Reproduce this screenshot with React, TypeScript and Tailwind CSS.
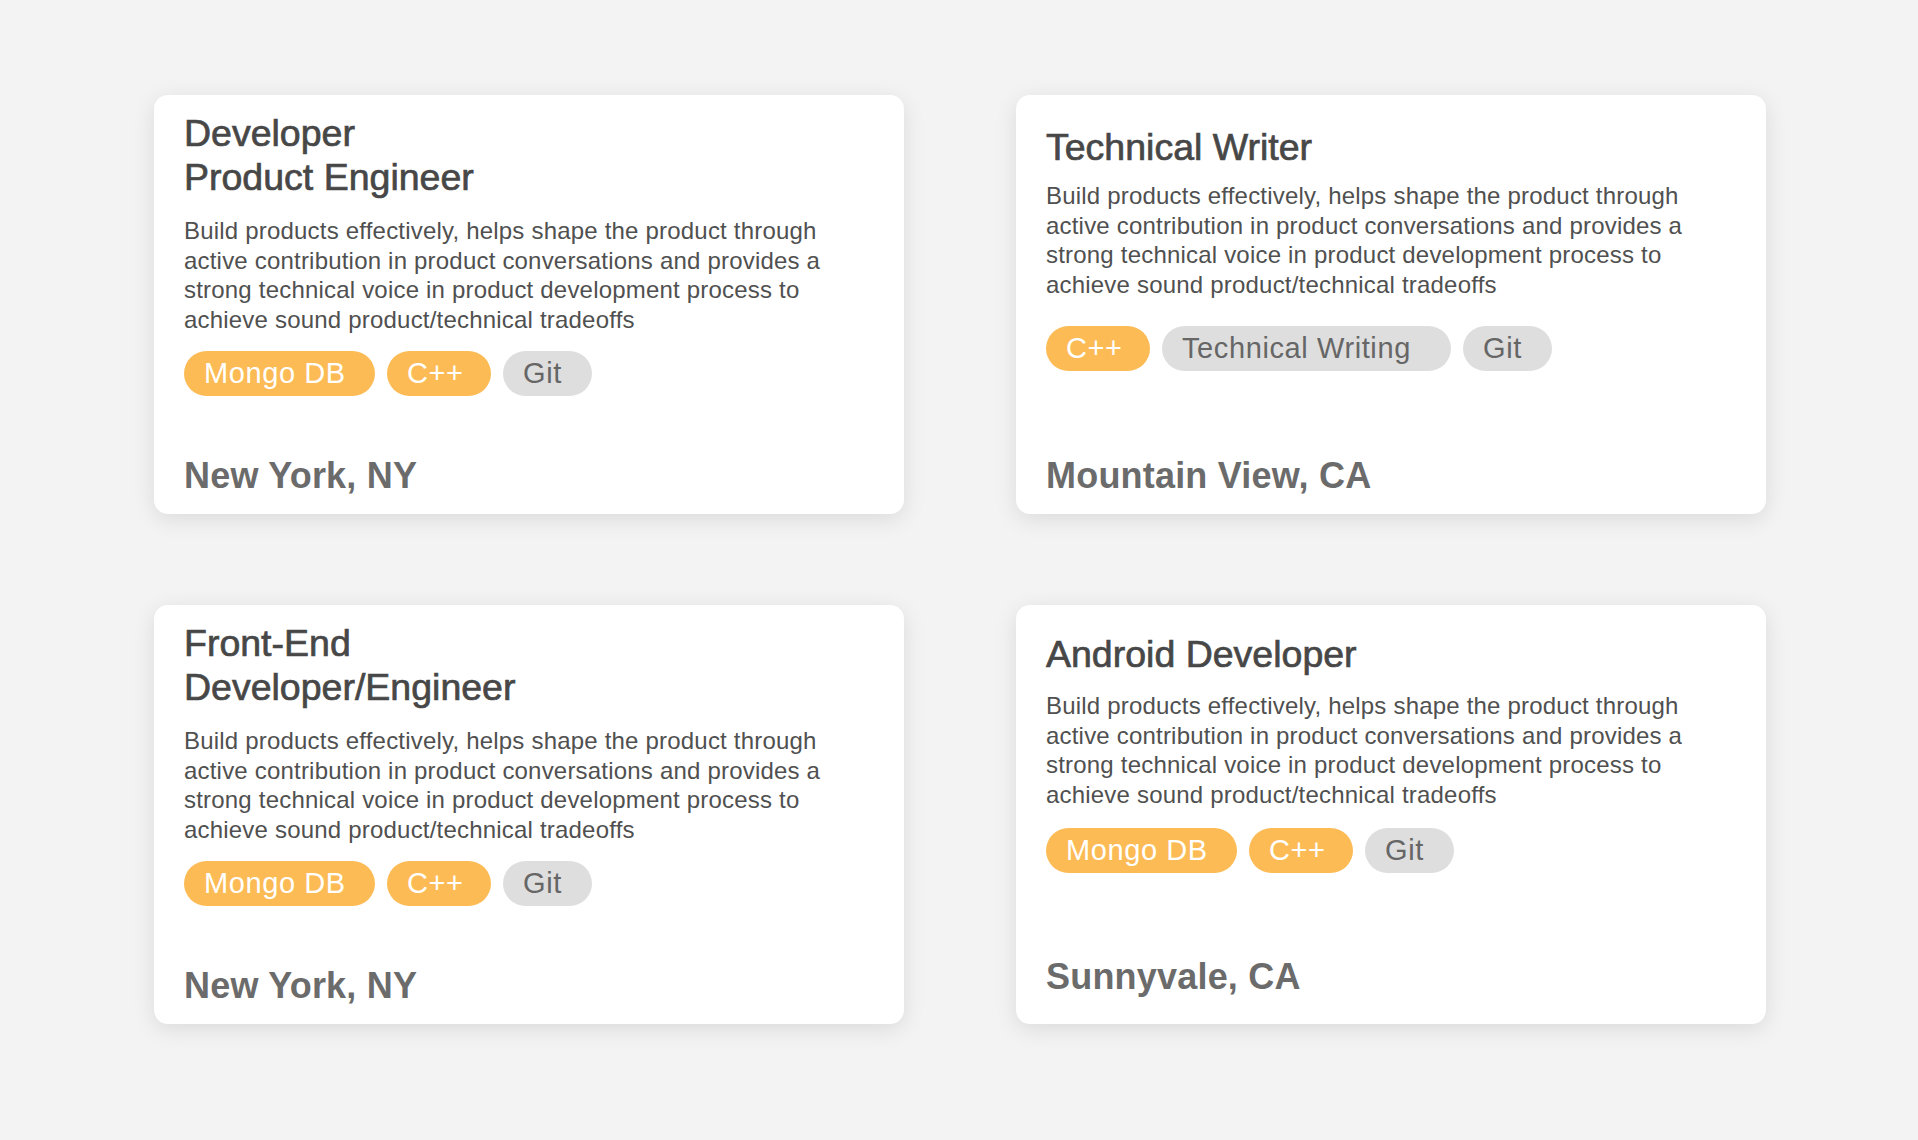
const desc =
  "Build products effectively, helps shape the product through active contribution in product conversations and provides a strong technical voice in product development process to achieve sound product/technical tradeoffs";

type Tag = { label: string; hot: boolean; w: string };

type Job = {
  title: string[];
  tags: Tag[];
  location: string;
  pad: string;
  descGap: string;
  tagGap: string;
};

const mongo: Tag = { label: "Mongo DB", hot: true, w: "w-[191px]" };
const cpp: Tag = { label: "C++", hot: true, w: "w-[104px]" };
const git: Tag = { label: "Git", hot: false, w: "w-[89px]" };

const jobs: Job[] = [
  {
    title: ["Developer", "Product Engineer"],
    tags: [mongo, cpp, git],
    location: "New York, NY",
    pad: "pt-[16px] pb-[16px]",
    descGap: "mt-[17px]",
    tagGap: "mt-[17px]",
  },
  {
    title: ["Technical Writer"],
    tags: [cpp, { label: "Technical Writing", hot: false, w: "w-[289px]" }, git],
    location: "Mountain View, CA",
    pad: "pt-[30px] pb-[16px]",
    descGap: "mt-[12px]",
    tagGap: "mt-[27px]",
  },
  {
    title: ["Front-End", "Developer/Engineer"],
    tags: [mongo, cpp, git],
    location: "New York, NY",
    pad: "pt-[16px] pb-[16px]",
    descGap: "mt-[17px]",
    tagGap: "mt-[17px]",
  },
  {
    title: ["Android Developer"],
    tags: [mongo, cpp, git],
    location: "Sunnyvale, CA",
    pad: "pt-[27px] pb-[25px]",
    descGap: "mt-[15px]",
    tagGap: "mt-[19px]",
  },
];

function Pill({ tag }: { tag: Tag }) {
  return (
    <span
      className={`${tag.w} h-[45px] rounded-full flex items-center pl-[20px] text-[29px] tracking-[0.6px] leading-none ${
        tag.hot ? "bg-[#fcbb55] text-white" : "bg-[#dedede] text-[#666666]"
      }`}
    >
      {tag.label}
    </span>
  );
}

function JobCard({ job }: { job: Job }) {
  return (
    <div
      className={`h-[419px] bg-white rounded-[14px] shadow-[0_5px_22px_rgba(0,0,0,0.1)] px-[30px] flex flex-col ${job.pad}`}
    >
      <h2 className="text-[37.5px] leading-[44px] text-[#474747] [-webkit-text-stroke:0.7px_#474747]">
        {job.title.map((line) => (
          <div key={line}>{line}</div>
        ))}
      </h2>
      <p
        className={`${job.descGap} max-w-[670px] text-[24px] leading-[29.5px] tracking-[0.2px] text-[#505050]`}
      >
        {desc}
      </p>
      <div className={`${job.tagGap} flex gap-[12px]`}>
        {job.tags.map((t) => (
          <Pill key={t.label} tag={t} />
        ))}
      </div>
      <p className="mt-auto text-[36px] leading-[44px] font-bold text-[#6b6b6b] tracking-[0.2px]">
        {job.location}
      </p>
    </div>
  );
}

export default function App() {
  return (
    <div
      className="min-h-screen bg-[#f3f3f3] pt-[95px] pb-[116px] pl-[154px] pr-[152px]"
      style={{ fontFamily: '"Liberation Sans", Arial, sans-serif' }}
    >
      <div className="grid grid-cols-[750px_750px] gap-x-[112px] gap-y-[91px]">
        {jobs.map((j) => (
          <JobCard key={j.title.join(" ")} job={j} />
        ))}
      </div>
    </div>
  );
}
